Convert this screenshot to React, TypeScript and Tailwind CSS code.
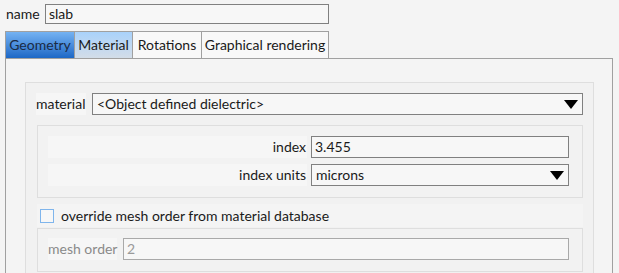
import React from "react";

function Caret() {
  return (
    <svg width="14" height="9" viewBox="0 0 14 9" className="shrink-0">
      <path d="M0 0 H14 L7 9 Z" fill="#000" />
    </svg>
  );
}

function TextBox({ value, w, disabled }: { value: string; w: string; disabled?: boolean }) {
  return (
    <div
      className={`${w} shrink-0 h-[22px] flex items-center px-[3px] border ${
        disabled ? "border-[#a9a9a9] text-[#9a9a9a]" : "border-[#808080] text-[#1a1a1a]"
      } bg-[#f7f7f7]`}
    >
      {value}
    </div>
  );
}

function Combo({ value, w }: { value: string; w: string }) {
  return (
    <div className={`${w} shrink-0 h-[22px] flex items-center justify-between pl-[4px] pr-[4px] border border-[#808080] bg-[#f7f7f7] text-[#1a1a1a]`}>
      <span>{value}</span>
      <Caret />
    </div>
  );
}

export default function App() {
  const tabs = ["Geometry", "Material", "Rotations", "Graphical rendering"];
  return (
    <div
      className="w-[619px] h-[273px] overflow-hidden bg-[#f4f4f4] text-[14px] text-[#1a1a1a] leading-none whitespace-nowrap"
      style={{ fontFamily: "Lato, 'Noto Sans', sans-serif" }}
    >
      {/* name row */}
      <div className="flex items-center pt-[4px] pl-[6px] gap-[6px]">
        <span className="w-[33px]">name</span>
        <div className="w-[284px] h-[20px] flex items-center px-[3px] border border-[#808080] bg-[#f7f7f7]">slab</div>
      </div>

      {/* tabs */}
      <div className="flex pl-[5px] mt-[7px] h-[27px]">
        {tabs.map((t, i) => (
          <div
            key={t}
            className={`h-[27px] shrink-0 flex items-center justify-center border-t border-r border-[#a0a0a0] ${i === 0 ? "border-l" : ""} ${
              i === 0
                ? "w-[70px] bg-gradient-to-b from-[#74b2f2] to-[#1c68c6] text-[#1b2b44]"
                : i === 1
                ? "w-[58px] bg-gradient-to-b from-[#a9d2fb] to-[#d3dde8]"
                : i === 2
                ? "w-[69px] bg-[#f8f8f8]"
                : "w-[127px] bg-[#f8f8f8]"
            }`}
          >
            {t}
          </div>
        ))}
      </div>

      {/* tab pane */}
      <div className="ml-[5px] w-[608px] h-[300px] border border-[#a0a0a0] bg-[#f4f4f4] pt-[23px] pl-[19px]">
        <div className="w-[569px] h-[300px] border border-[#dedede] bg-[#f1f1f1] pt-[10px] pl-[10px]">
          {/* material row */}
          <div className="flex items-center gap-[6px]">
            <span className="w-[50px] h-[22px] flex items-center bg-[#f6f6f6]">material</span>
            <Combo value="<Object defined dielectric>" w="w-[491px]" />
          </div>

          {/* index group */}
          <div className="mt-[10px] ml-[1px] w-[546px] h-[73px] border border-[#dedede] bg-[#f2f2f2] pt-[10px] pl-[10px] flex flex-col gap-[6px]">
            <div className="flex items-center gap-[4px]">
              <span className="w-[259px] h-[22px] flex items-center justify-end pr-[1px] bg-[#f6f6f6]">index</span>
              <TextBox value="3.455" w="w-[258px]" />
            </div>
            <div className="flex items-center gap-[4px]">
              <span className="w-[259px] h-[22px] flex items-center justify-end pr-[1px] bg-[#f6f6f6]">index units</span>
              <Combo value="microns" w="w-[258px]" />
            </div>
          </div>

          {/* checkbox row */}
          <div className="mt-[6px] ml-[1px] w-[546px] h-[23px] flex items-center bg-[#f4f4f4] pl-[3px] gap-[7px]">
            <div className="w-[14px] h-[14px] border border-[#7fb5ec] bg-[#f7f7f7]" />
            <span>override mesh order from material database</span>
          </div>

          {/* mesh order group */}
          <div className="mt-[1px] ml-[1px] w-[546px] h-[44px] border border-[#dedede] bg-[#f2f2f2] pt-[9px] pl-[10px] flex gap-[6px] items-start">
            <span className="w-[69px] h-[22px] flex items-center bg-[#f6f6f6] text-[#8a8a8a]">mesh order</span>
            <TextBox value="2" w="w-[446px]" disabled />
          </div>
        </div>
      </div>
    </div>
  );
}
